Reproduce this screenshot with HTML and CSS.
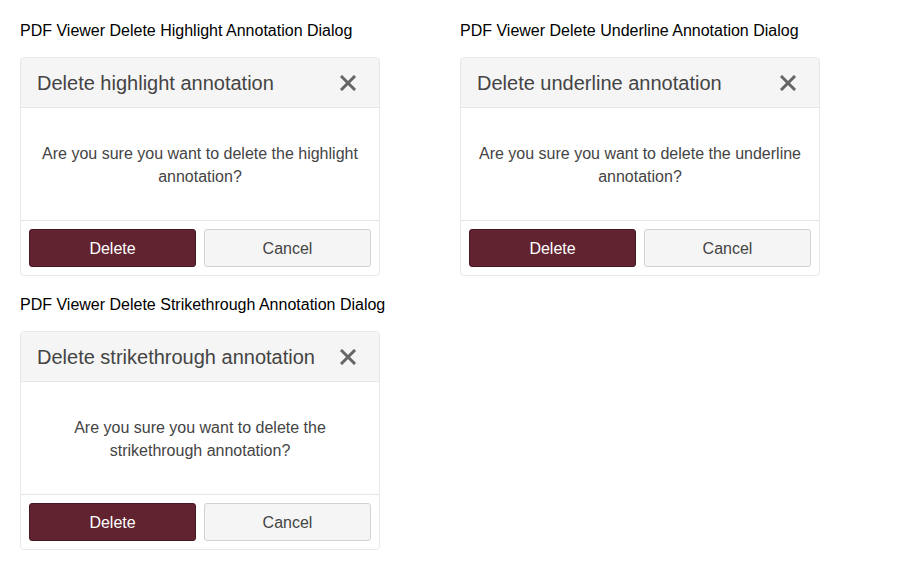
FILE: index.html
```html
<!DOCTYPE html>
<html>
<head>
<meta charset="utf-8">
<link rel="stylesheet" href="styles.css">
</head>
<body>
<div class="grid">
  <section class="demo">
    <h2 class="demo-title">PDF Viewer Delete Highlight Annotation Dialog</h2>
    <div class="dialog">
      <div class="dialog-header">
        <span class="dialog-title">Delete highlight annotation</span>
        <span class="close" aria-label="Close"><svg width="16" height="16" viewBox="0 0 16 16"><path d="M2 2 L14 14 M14 2 L2 14" stroke="#666" stroke-width="3" stroke-linecap="square" fill="none"/></svg></span>
      </div>
      <div class="dialog-body">Are you sure you want to delete the highlight annotation?</div>
      <div class="dialog-footer">
        <button class="btn btn-primary">Delete</button>
        <button class="btn btn-default">Cancel</button>
      </div>
    </div>
  </section>
  <section class="demo">
    <h2 class="demo-title">PDF Viewer Delete Underline Annotation Dialog</h2>
    <div class="dialog">
      <div class="dialog-header">
        <span class="dialog-title">Delete underline annotation</span>
        <span class="close" aria-label="Close"><svg width="16" height="16" viewBox="0 0 16 16"><path d="M2 2 L14 14 M14 2 L2 14" stroke="#666" stroke-width="3" stroke-linecap="square" fill="none"/></svg></span>
      </div>
      <div class="dialog-body">Are you sure you want to delete the underline annotation?</div>
      <div class="dialog-footer">
        <button class="btn btn-primary">Delete</button>
        <button class="btn btn-default">Cancel</button>
      </div>
    </div>
  </section>
  <section class="demo">
    <h2 class="demo-title">PDF Viewer Delete Strikethrough Annotation Dialog</h2>
    <div class="dialog">
      <div class="dialog-header">
        <span class="dialog-title">Delete strikethrough annotation</span>
        <span class="close" aria-label="Close"><svg width="16" height="16" viewBox="0 0 16 16"><path d="M2 2 L14 14 M14 2 L2 14" stroke="#666" stroke-width="3" stroke-linecap="square" fill="none"/></svg></span>
      </div>
      <div class="dialog-body">Are you sure you want to delete the strikethrough annotation?</div>
      <div class="dialog-footer">
        <button class="btn btn-primary">Delete</button>
        <button class="btn btn-default">Cancel</button>
      </div>
    </div>
  </section>
</div>
</body>
</html>
```

FILE: styles.css
```css
html, body {
  margin: 0;
  padding: 0;
  background: #fff;
}
body {
  font-family: "Liberation Sans", Arial, sans-serif;
  padding: 21px 20px 20px;
}
.grid {
  display: grid;
  grid-template-columns: 360px 360px;
  column-gap: 80px;
  row-gap: 19px;
  align-items: start;
}
.demo-title {
  margin: 0 0 16px 0;
  font-size: 16px;
  font-weight: normal;
  line-height: 20px;
  color: #000;
  white-space: nowrap;
}
.dialog {
  width: 360px;
  box-sizing: border-box;
  border: 1px solid #e8e8e8;
  border-radius: 4px;
  background: #fff;
  overflow: hidden;
}
.dialog-header {
  display: flex;
  align-items: center;
  justify-content: space-between;
  background: #f5f5f5;
  border-bottom: 1px solid #e6e6e6;
  padding: 13px 16px 11px;
  height: 25px;
}
.dialog-title {
  font-size: 20px;
  line-height: 25px;
  color: #444;
}
.close {
  display: flex;
  width: 16px;
  height: 16px;
  margin-right: 7px;
  margin-top: -2px;
}
.dialog-body {
  padding: 34px 16px 32px;
  font-size: 16px;
  line-height: 23px;
  color: #444;
  text-align: center;
}
.dialog-footer {
  display: flex;
  gap: 8px;
  padding: 8px;
  border-top: 1px solid #e6e6e6;
}
.btn {
  flex: 1;
  height: 38px;
  font-family: "Liberation Sans", Arial, sans-serif;
  font-size: 16px;
  border-radius: 3px;
  padding: 2px 0 0;
  cursor: pointer;
}
.btn-primary {
  background: #612330;
  border: 1px solid #4a1823;
  color: #fff;
}
.btn-default {
  background: #f5f5f5;
  border: 1px solid #d2d2d2;
  color: #444;
}
```
